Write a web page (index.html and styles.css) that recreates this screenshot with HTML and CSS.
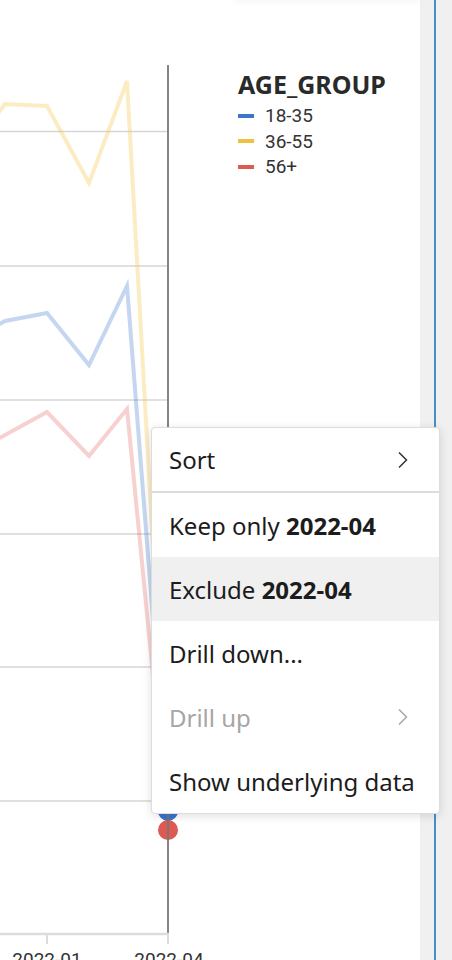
FILE: index.html
```html
<!DOCTYPE html>
<html>
<head>
<meta charset="utf-8">
<link rel="stylesheet" href="styles.css">
</head>
<body>
<div class="page">
  <div class="main">
    <div class="topcard"></div>
    <svg class="chart" width="230" height="960" viewBox="0 0 230 960">
      <g class="grid">
        <line x1="0" y1="131.5" x2="168" y2="131.5"/>
        <line x1="0" y1="266" x2="168" y2="266"/>
        <line x1="0" y1="400" x2="168" y2="400"/>
        <line x1="0" y1="534" x2="168" y2="534"/>
        <line x1="0" y1="667" x2="168" y2="667"/>
        <line x1="0" y1="801" x2="168" y2="801"/>
      </g>
      <polyline class="s-yellow" points="-4,116 5,104 47,106 89,183 127,81 168,815"/>
      <polyline class="s-blue" points="-4,326 5,321 47,313 89,365 127,286 168,812"/>
      <polyline class="s-red" points="-4,440 47,412 89,456 127,409 168,829"/>
      <circle class="d-blue" cx="168" cy="811" r="10"/>
      <circle class="d-red" cx="168" cy="830" r="10"/>
      <line class="cursor" x1="168" y1="65" x2="168" y2="934"/>
      <line class="axis" x1="0" y1="934" x2="169" y2="934"/>
      <line class="tick" x1="47" y1="934" x2="47" y2="944"/>
      <line class="tick" x1="168" y1="934" x2="168" y2="944"/>
      <text class="xlabel" x="47" y="966">2022-01</text>
      <text class="xlabel" x="169" y="966">2022-04</text>
    </svg>
    <div class="legend">
      <div class="legend-title">AGE_GROUP</div>
      <div class="legend-item"><span class="sw sw-blue"></span><span>18-35</span></div>
      <div class="legend-item"><span class="sw sw-yellow"></span><span>36-55</span></div>
      <div class="legend-item"><span class="sw sw-red"></span><span>56+</span></div>
    </div>
  </div>
  <div class="side"><div class="side-line"></div></div>

  <div class="menu">
    <div class="item item-sep">
      <span>Sort</span>
      <svg class="chev" width="12" height="18" viewBox="0 0 12 18"><polyline points="2,1.5 9.5,9 2,16.5"/></svg>
    </div>
    <div class="item"><span>Keep only <b>2022-04</b></span></div>
    <div class="item item-hover"><span>Exclude <b>2022-04</b></span></div>
    <div class="item"><span>Drill down...</span></div>
    <div class="item item-disabled">
      <span>Drill up</span>
      <svg class="chev" width="12" height="18" viewBox="0 0 12 18"><polyline points="2,1.5 9.5,9 2,16.5"/></svg>
    </div>
    <div class="item"><span>Show underlying data</span></div>
  </div>
</div>
</body>
</html>
```

FILE: styles.css
```css
html, body {
  margin: 0;
  padding: 0;
  background: #ffffff;
}
body {
  width: 452px;
  height: 960px;
  overflow: hidden;
}
.page {
  position: relative;
  display: flex;
  width: 452px;
  height: 960px;
}
.main {
  position: relative;
  width: 420px;
  height: 960px;
  background: #ffffff;
  display: flex;
  align-items: flex-start;
}
.topcard {
  position: absolute;
  left: 235px;
  right: 0;
  top: -20px;
  height: 20px;
  background: #ffffff;
  box-shadow: 0 1px 7px rgba(0, 0, 0, 0.05);
}
.chart {
  display: block;
  flex: none;
}
.grid line {
  stroke: #d6d6d6;
  stroke-width: 1.5;
}
polyline {
  fill: none;
  stroke-width: 4;
  stroke-linejoin: miter;
}
.s-yellow { stroke: rgba(242, 196, 70, 0.32); }
.s-blue { stroke: rgba(60, 120, 205, 0.3); }
.s-red { stroke: rgba(222, 90, 82, 0.28); }
.d-blue { fill: #3b74cc; }
.d-red { fill: #dc5a51; }
.cursor {
  stroke: #777777;
  stroke-width: 1.8;
}
.axis {
  stroke: #dcdcdc;
  stroke-width: 2.5;
}
.tick {
  stroke: #dcdcdc;
  stroke-width: 2;
}
.xlabel {
  font-family: Roboto, "Liberation Sans", sans-serif;
  font-size: 19px;
  fill: #333333;
  text-anchor: middle;
}
.legend {
  padding: 68px 0 0 8px;
  font-family: Roboto, "Liberation Sans", sans-serif;
  color: #333333;
}
.legend-title {
  font-family: "Noto Sans", Lato, sans-serif;
  font-weight: 700;
  font-size: 25px;
  line-height: 32px;
  color: #2a2a2a;
  margin-bottom: 3px;
  white-space: nowrap;
}
.legend-item {
  display: flex;
  align-items: center;
  gap: 11px;
  font-size: 19px;
  line-height: 25.5px;
}
.sw {
  display: block;
  width: 16px;
  height: 4px;
}
.sw-blue { background: #3a75d0; }
.sw-yellow { background: #f0c141; }
.sw-red { background: #dd5b52; }
.side {
  width: 32px;
  height: 960px;
  background: #f0f0f0;
  display: flex;
}
.side-line {
  margin-left: 14px;
  width: 2px;
  height: 100%;
  background: #4a8ec6;
}
.menu {
  position: absolute;
  left: 151px;
  top: 427px;
  width: 287px;
  background: #ffffff;
  border: 1px solid #dddddd;
  border-radius: 4px;
  box-shadow: 0 2px 10px rgba(0, 0, 0, 0.13);
  font-family: "Noto Sans", Lato, sans-serif;
  font-size: 24px;
  color: #1c1c1c;
  overflow: hidden;
}
.item {
  height: 64px;
  display: flex;
  align-items: center;
  justify-content: space-between;
  padding: 0 30px 0 17px;
  white-space: nowrap;
}
.item b {
  font-weight: 700;
}
.item-sep {
  height: 63px;
  border-bottom: 2px solid #dcdcdc;
}
.item-hover {
  background: #f0f0f0;
}
.item-disabled {
  color: #a6a6a6;
}
.chev polyline {
  fill: none;
  stroke: #333333;
  stroke-width: 1.5;
}
.item-disabled .chev polyline {
  stroke: #a6a6a6;
}
```
